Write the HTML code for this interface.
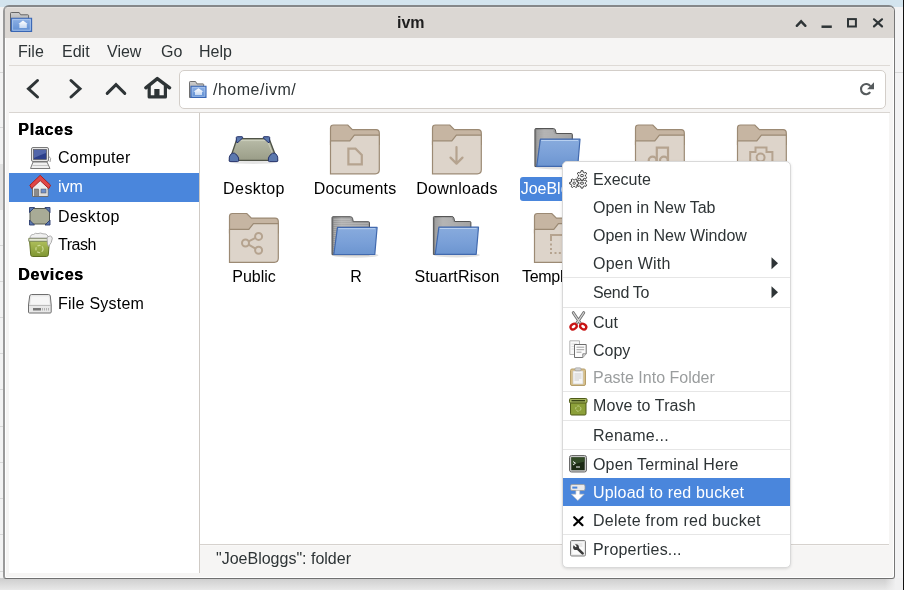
<!DOCTYPE html>
<html><head><meta charset="utf-8">
<style>
*{margin:0;padding:0;box-sizing:border-box}
html,body{width:904px;height:590px;overflow:hidden;background:#f2f2f2;font-family:"Liberation Sans",sans-serif;font-size:16px;color:#2e3436}
.a{position:absolute}
.t{position:absolute;white-space:nowrap;line-height:20px;height:20px;will-change:transform}
svg{position:absolute;overflow:visible}
.k{color:#000}
</style></head><body>
<!-- background -->
<div class="a" style="left:0;top:0;width:904px;height:7px;background:#d3e4ee"></div>
<div class="a" style="left:0;top:7px;width:4px;height:583px;background:#f3f3f3"></div>
<div class="a" style="left:0;top:72px;width:4px;height:1px;background:#d8d8d8"></div>
<div class="a" style="left:0;top:127px;width:4px;height:1px;background:#d8d8d8"></div>
<div class="a" style="left:0;top:245px;width:3px;height:1px;background:#d9d9d9"></div><div class="a" style="left:0;top:281px;width:3px;height:1px;background:#d9d9d9"></div><div class="a" style="left:0;top:317px;width:3px;height:1px;background:#d9d9d9"></div><div class="a" style="left:0;top:353px;width:3px;height:1px;background:#d9d9d9"></div><div class="a" style="left:0;top:389px;width:3px;height:1px;background:#d9d9d9"></div><div class="a" style="left:0;top:426px;width:3px;height:1px;background:#d9d9d9"></div><div class="a" style="left:0;top:462px;width:3px;height:1px;background:#d9d9d9"></div><div class="a" style="left:0;top:498px;width:3px;height:1px;background:#d9d9d9"></div><div class="a" style="left:0;top:534px;width:3px;height:1px;background:#d9d9d9"></div><div class="a" style="left:0;top:571px;width:3px;height:1px;background:#d9d9d9"></div><div class="a" style="left:0;top:164px;width:3px;height:46px;background:#e2e2e2"></div>
<div class="a" style="left:895px;top:7px;width:8px;height:583px;background:#f3f3f4"></div>
<div class="a" style="left:895px;top:72px;width:8px;height:1px;background:#d8d8d8"></div>
<div class="a" style="left:903px;top:0;width:1px;height:590px;background:#111"></div>
<div class="a" style="left:0;top:578px;width:895px;height:12px;background:linear-gradient(#cdcdcd,#e8e8e8)"></div><div class="a" style="left:885px;top:578px;width:18px;height:12px;background:linear-gradient(90deg,rgba(240,240,241,0),#f0f0f1 60%)"></div>

<!-- window -->
<div class="a" style="left:3px;top:5px;width:892px;height:574px;border-style:solid;border-color:#858789 #777 #707070 #9a9a9a;border-width:2px 1px 1px 2px;border-radius:6px 6px 3px 3px;background:#f6f5f4;overflow:hidden;box-shadow:inset 1px 0 0 #fff,inset -1px -1px 0 #fff">
  <div class="a" style="left:0;top:0;width:890px;height:31px;background:#dbd7d3;border-top:1px solid #e4e1de"></div>
</div>

<!-- title icon -->
<svg style="left:0;top:0" width="40" height="40">
 <defs>
  <linearGradient id="fg1" x1="0" y1="0" x2="0" y2="1"><stop offset="0" stop-color="#cfcfcf"/><stop offset="1" stop-color="#8d8d8d"/></linearGradient>
  <linearGradient id="fb1" x1="0" y1="0" x2="0" y2="1"><stop offset="0" stop-color="#8fb2e6"/><stop offset="1" stop-color="#5f8ed2"/></linearGradient>
  <linearGradient id="fh1" x1="0" y1="0" x2="0" y2="1"><stop offset="0" stop-color="#ffffff"/><stop offset="1" stop-color="#c6d8f2"/></linearGradient>
 </defs>
 <path d="M10.5,31 V13.3 Q10.5,12.5 11.3,12.5 H19.2 L20.6,14.8 H27.8 Q28.6,14.8 28.6,15.6 V31 Z" fill="url(#fg1)" stroke="#666" stroke-width="1"/>
 <path d="M11.3,18.2 H31.6 V31.5 H11.3 Z" fill="url(#fb1)" stroke="#3966b4" stroke-width="1.1"/>
 <path d="M12.6,19.6 H30.3 V30.2 H12.6 Z" fill="none" stroke="#b4cdf0" stroke-width=".9" opacity=".8"/>
 <path d="M23,20.6 L18.4,24 H19.4 V28 H26.8 V24 H27.7 Z" fill="url(#fh1)"/>
</svg>
<!-- title -->
<div class="t" style="left:397px;top:13px;font-weight:bold;color:#1e1e1e">ivm</div>
<!-- window controls -->
<svg style="left:0;top:0" width="904" height="40">
 <g fill="none" stroke="#2e3436" stroke-width="2.2">
  <path d="M796.8,25.8 L801.1,21.3 L805.4,25.8" stroke-width="2.4" stroke-linecap="round"/>
  <path d="M821.5,26.7 H831.8" stroke-width="2.5"/>
  <rect x="848" y="19.1" width="7.9" height="7.4" stroke-width="2"/>
  <path d="M874,19.3 L882,26.4 M882,19.3 L874,26.4" stroke-linecap="round"/>
 </g>
</svg>

<!-- menu bar -->
<div class="t" style="left:18px;top:42px">File</div>
<div class="t" style="left:62px;top:42px">Edit</div>
<div class="t" style="left:107px;top:42px">View</div>
<div class="t" style="left:161px;top:42px">Go</div>
<div class="t" style="left:199px;top:42px">Help</div>
<div class="a" style="left:9px;top:65px;width:881px;height:1px;background:#dedad6"></div>

<!-- toolbar -->
<svg style="left:0;top:60px" width="180" height="50">
 <g fill="none" stroke="#2e3436" stroke-width="3" stroke-linecap="round" stroke-linejoin="miter">
  <path d="M37.5,20.5 L28.5,28.8 L37.5,37"/>
  <path d="M71,20.5 L80,28.8 L71,37"/>
  <path d="M107.2,33.4 L116,24.6 L124.8,33.4"/>
 </g>
 <g fill="none" stroke="#2e3436" stroke-linecap="round" stroke-linejoin="round">
  <path d="M145.8,27.8 L157.3,18.6 L169.6,27.8" stroke-width="3.4"/>
  <path d="M149.2,26 V36.9 H165.4 V26" stroke-width="3.2"/>
 </g>
 <rect x="154.3" y="29" width="5.2" height="9" fill="#2e3436"/>
</svg>
<div class="a" style="left:179px;top:70px;width:707px;height:39px;border:1px solid #d3cec9;border-radius:5px;background:#fff"></div>
<svg style="left:0;top:0" width="904" height="110">
 <path d="M189.5,97.5 V82.2 Q189.5,81.5 190.2,81.5 H195.6 L196.9,83.9 H203 Q203.7,83.9 203.7,84.6 V97.5 Z" fill="url(#fg1)" stroke="#707070" stroke-width="1"/>
 <path d="M191,86.3 H206 V97.5 H191 Z" fill="url(#fb1)" stroke="#3966b4" stroke-width="1.1"/>
 <path d="M192.2,87.5 H204.8 V96.3 H192.2 Z" fill="none" stroke="#b4cdf0" stroke-width=".8" opacity=".7"/>
 <path d="M198.5,88.2 L193.4,91.8 H195 V95 H202 V91.8 H203.6 Z" fill="url(#fh1)"/>
 <g fill="none" stroke="#555a5c" stroke-width="2.1">
  <path d="M870.2,92.2 A5.1,5.1 0 1 1 870.3,86.2"/>
 </g>
 <path d="M874,82.3 V89.2 H867.1 Z" fill="#555a5c"/>
</svg>
<div class="t" style="left:213px;top:80px;letter-spacing:.5px">/home/ivm/</div>
<div class="a" style="left:9px;top:112px;width:881px;height:1px;background:#d9d5d1"></div>

<!-- sidebar -->
<div class="a" style="left:9px;top:113px;width:190px;height:460px;background:#fff"></div>
<div class="a" style="left:199px;top:113px;width:1px;height:460px;background:#cfcac5"></div>
<div class="a" style="left:9px;top:173px;width:190px;height:29px;background:#4a86dc"></div>
<div class="t k" style="left:18px;top:120px;font-weight:bold;letter-spacing:.8px;text-shadow:.45px 0 0 #000">Places</div>
<div class="t k" style="left:58px;top:148px;letter-spacing:.3px">Computer</div>
<div class="t" style="left:58px;top:177px;color:#fff">ivm</div>
<div class="t k" style="left:58px;top:207px;letter-spacing:.45px">Desktop</div>
<div class="t k" style="left:58px;top:235px;letter-spacing:-.45px">Trash</div>
<div class="t k" style="left:18px;top:265px;font-weight:bold;letter-spacing:.75px;text-shadow:.45px 0 0 #000">Devices</div>
<div class="t k" style="left:58px;top:294px;letter-spacing:.23px">File System</div>

<!-- main view -->
<div class="a" style="left:200px;top:113px;width:689px;height:431px;background:#fff"></div>
<div class="a" style="left:200px;top:544px;width:689px;height:1px;background:#d6d2ce"></div><div class="a" style="left:200px;top:545px;width:689px;height:1px;background:#f9f8f7"></div>
<div class="t" style="left:216px;top:549px">"JoeBloggs": folder</div>


<!-- icon defs -->
<svg width="0" height="0" style="position:absolute">
 <defs>
  <symbol id="bf" viewBox="0 0 50 50" overflow="visible">
   <path d="M0.5,3.5 Q0.5,0.5 3.5,0.5 H17.8 L22.4,5.1 H46 Q49.3,5.1 49.3,8.4 V20 H0.5 Z" fill="#c6b5a2" stroke="#9c8a74" stroke-width="1.2"/>
   <path d="M0.5,16.3 H19.8 L24.4,10.7 H49.3 V45.3 Q49.3,49.3 45.3,49.3 H0.5 Z" fill="#ddd4ca" stroke="#9c8a74" stroke-width="1.2"/>
  </symbol>
  <linearGradient id="gb" x1="0" y1="0" x2="0" y2="1"><stop offset="0" stop-color="#88abdd"/><stop offset=".55" stop-color="#7aa0d8"/><stop offset="1" stop-color="#6c95d0"/></linearGradient>
  <linearGradient id="gg" x1="0" y1="0" x2="1" y2="0"><stop offset="0" stop-color="#7c7c7c"/><stop offset=".25" stop-color="#a5a5a5"/><stop offset="1" stop-color="#8a8a8a"/></linearGradient>
  <symbol id="blf" viewBox="0 0 50 44" overflow="visible">
   <ellipse cx="24" cy="39" rx="23" ry="2.5" fill="#000" opacity=".12"/>
   <path d="M0.5,1.5 Q0.5,0.5 1.5,0.5 H19 Q20.5,0.5 21,2 L21.8,5.5 H37 Q38,5.5 38,6.5 V38.5 H0.5 Z" fill="url(#gg)" stroke="#555" stroke-width="1"/>
   <path d="M2,3 H19 M2,5 H20 M2,7 H37 M2,9 H37 M2,11 H37 M2,13 H5 M2,15 H5 M2,17 H5 M2,19 H5 M2,21 H4 M2,23 H4 M2,25 H4 M2,27 H4 M2,29 H4 M2,31 H3.5 M2,33 H3.5 M2,35 H3.5" stroke="#d2d2d2" stroke-width=".7"/>
   <path d="M6,11.2 H45.6 L43.3,38.3 H2.3 Z" fill="url(#gb)" stroke="#4169ae" stroke-width="1.2" stroke-linejoin="round"/>
   <path d="M6.8,12.5 H43.6" stroke="#b8d0f0" stroke-width="1"/>
  </symbol>
 </defs>
</svg>

<!-- row 1 -->
<svg style="left:0;top:0" width="904" height="590">
 <!-- desktop trapezoid -->
 <g>
  <defs><linearGradient id="dg" x1="0" y1="0" x2="0" y2="1"><stop offset="0" stop-color="#b9bca8"/><stop offset="1" stop-color="#9a9d88"/></linearGradient></defs>
  <ellipse cx="253.5" cy="162.3" rx="23" ry="1.6" fill="#000" opacity=".1"/>
  <path d="M237,138.6 H269 L277.4,160.4 H229.6 Z" fill="url(#dg)" stroke="#505448" stroke-width="1.4" stroke-linejoin="round"/>
  <path d="M238.6,140.6 H267.4 L274.5,158.5" fill="none" stroke="#d2d5c4" stroke-width="1" opacity=".8"/>
  <path d="M236.3,137.4 Q236.3,136.7 237.3,136.7 H242 Q243.4,136.9 242.4,138.2 L238,142.3 Q236.7,143.3 236.4,142 Z" fill="#5b78ae" stroke="#26336a" stroke-width="1"/>
  <path d="M269.7,137.4 Q269.7,136.7 268.7,136.7 H264 Q262.6,136.9 263.6,138.2 L268,142.3 Q269.3,143.3 269.6,142 Z" fill="#5b78ae" stroke="#26336a" stroke-width="1"/>
  <path d="M229.2,160.8 Q228.8,156.5 230.5,154.5 Q232.5,152.5 234.5,153.2 Q237.5,154.8 238.6,158 L238.6,160.8 Q238.6,161.6 237.6,161.6 H230 Q229.2,161.6 229.2,160.8 Z" fill="#5b78ae" stroke="#26336a" stroke-width="1"/>
  <path d="M277.8,160.8 Q278.2,156.5 276.5,154.5 Q274.5,152.5 272.5,153.2 Q269.5,154.8 268.4,158 L268.4,160.8 Q268.4,161.6 269.4,161.6 H277 Q277.8,161.6 277.8,160.8 Z" fill="#5b78ae" stroke="#26336a" stroke-width="1"/>
 </g>
 <!-- documents -->
 <use href="#bf" x="330" y="124.5" width="50" height="50"/>
 <path d="M348.4,148.6 H355.5 L361.8,154.9 V164.4 H348.4 Z" fill="none" stroke="#b5a38f" stroke-width="2.2" stroke-linejoin="miter"/>
 <!-- downloads -->
 <use href="#bf" x="432" y="124.5" width="50" height="50"/>
 <path d="M456.5,147 V163.5 M450.5,157.6 L456.5,163.6 L462.5,157.6" fill="none" stroke="#b5a38f" stroke-width="2.2" stroke-linecap="round" stroke-linejoin="round"/>
 <!-- JoeBloggs -->
 <use href="#blf" x="534.4" y="128" width="50" height="44"/>
 <!-- music -->
 <use href="#bf" x="635" y="124.5" width="50" height="50"/>
 <path d="M656.8,165 V147.6 H668 V165" fill="none" stroke="#b5a38f" stroke-width="2.2"/>
 <circle cx="652.6" cy="160.6" r="3.9" fill="none" stroke="#b5a38f" stroke-width="2.2"/><circle cx="663.9" cy="160.6" r="3.9" fill="none" stroke="#b5a38f" stroke-width="2.2"/>
 <!-- pictures -->
 <use href="#bf" x="737" y="124.5" width="50" height="50"/>
 <path d="M750.2,170 V152 H755.5 V147.5 H766.5 V152 H772.4 V170" fill="none" stroke="#b5a38f" stroke-width="2"/>
 <circle cx="760.6" cy="157.6" r="4" fill="none" stroke="#b5a38f" stroke-width="2"/>
 <!-- row 2 -->
 <use href="#bf" x="229" y="213" width="50" height="50"/>
 <g fill="none" stroke="#b5a38f" stroke-width="2">
  <circle cx="245.5" cy="243" r="3.5"/><circle cx="258.6" cy="236.4" r="3.5"/><circle cx="258.6" cy="250.2" r="3.5"/>
  <path d="M248.6,241.4 L255.5,237.9 M248.6,244.6 L255.5,248.7"/>
 </g>
 <use href="#blf" x="331.5" y="216.2" width="50" height="44"/>
 <use href="#blf" x="432.9" y="216" width="50" height="44"/>
 <use href="#bf" x="534" y="213" width="50" height="50"/>
 <path d="M551,241 V235 H562" fill="none" stroke="#b5a38f" stroke-width="2"/>
 <g fill="#b5a38f"><rect x="550" y="243.5" width="2" height="2"/><rect x="550" y="248" width="2" height="2"/><rect x="550" y="252" width="2" height="2"/><rect x="554.5" y="252" width="2" height="2"/><rect x="558.8" y="252" width="2" height="2"/></g>
</svg>
<div class="t k" style="left:203.6px;top:179px;width:100px;text-align:center;letter-spacing:.45px">Desktop</div>
<div class="t k" style="left:305px;top:179px;width:100px;text-align:center;letter-spacing:.2px">Documents</div>
<div class="t k" style="left:406.6px;top:179px;width:100px;text-align:center;letter-spacing:.25px">Downloads</div>
<div class="a" style="left:520px;top:177px;width:76px;height:24px;border-radius:3px;background:#4a86dc"></div>
<div class="t" style="left:508.2px;top:179px;width:100px;text-align:center;color:#fff">JoeBloggs</div>
<div class="t k" style="left:203.6px;top:267px;width:100px;text-align:center">Public</div>
<div class="t k" style="left:306px;top:267px;width:100px;text-align:center">R</div>
<div class="t k" style="left:407.3px;top:267px;width:100px;text-align:center;letter-spacing:.15px">StuartRison</div>
<div class="t k" style="left:522px;top:267px;letter-spacing:-.3px">Templates</div>

<!-- context menu -->
<div class="a" style="left:562px;top:161px;width:229px;height:407px;background:#fff;border:1px solid #d9d9d9;border-radius:5px;box-shadow:0 1px 3px rgba(0,0,0,.12)"></div>
<div class="a" style="left:563px;top:277px;width:227px;height:1px;background:#e6e6e6"></div>
<div class="a" style="left:563px;top:307px;width:227px;height:1px;background:#e6e6e6"></div>
<div class="a" style="left:563px;top:391px;width:227px;height:1px;background:#e6e6e6"></div>
<div class="a" style="left:563px;top:420px;width:227px;height:1px;background:#e6e6e6"></div>
<div class="a" style="left:563px;top:449px;width:227px;height:1px;background:#e6e6e6"></div>
<div class="a" style="left:563px;top:534px;width:227px;height:1px;background:#e6e6e6"></div>
<div class="a" style="left:563px;top:478px;width:227px;height:28px;background:#4a86dc"></div>
<div class="t" style="left:593px;top:170px">Execute</div>
<div class="t" style="left:593px;top:198px">Open in New Tab</div>
<div class="t" style="left:593px;top:226px">Open in New Window</div>
<div class="t" style="left:593px;top:254px;letter-spacing:.22px">Open With</div>
<div class="t" style="left:593px;top:283px;letter-spacing:-.35px">Send To</div>
<div class="t" style="left:593px;top:313px">Cut</div>
<div class="t" style="left:593px;top:341px">Copy</div>
<div class="t" style="left:593px;top:368px;color:#9a9d9e">Paste Into Folder</div>
<div class="t" style="left:593px;top:396px;letter-spacing:.1px">Move to Trash</div>
<div class="t" style="left:593px;top:426px;letter-spacing:.22px">Rename...</div>
<div class="t" style="left:593px;top:455px;letter-spacing:.15px">Open Terminal Here</div>
<div class="t" style="left:593px;top:483px;color:#fff;letter-spacing:.18px">Upload to red bucket</div>
<div class="t" style="left:593px;top:511px;letter-spacing:.27px">Delete from red bucket</div>
<div class="t" style="left:593px;top:540px;letter-spacing:.19px">Properties...</div>
<svg style="left:0;top:0" width="904" height="590">
 <path d="M771.5,257.2 L778,263.2 L771.5,269.2 Z" fill="#2e3436"/>
 <path d="M771.5,286.2 L778,292.2 L771.5,298.2 Z" fill="#2e3436"/>
</svg>


<!-- sidebar icons -->
<svg style="left:0;top:0" width="210" height="330">
 <!-- computer -->
 <g>
  <rect x="31.5" y="147.5" width="17" height="14" rx="1.5" fill="#e6e6e6" stroke="#7a7a7a" stroke-width="1"/>
  <rect x="33.5" y="149.5" width="13" height="10" fill="#2c3f8a" stroke="#555" stroke-width=".6"/>
  <path d="M34,150 L46,150 L46,153 Q40,155 34,158 Z" fill="#6d80c0" opacity=".6"/>
  <path d="M33,162 H47 L50,168.5 H30.5 Z" fill="#f0f0f0" stroke="#7a7a7a" stroke-width="1" stroke-linejoin="round"/>
  <path d="M32.5,165.5 H48" stroke="#bbb" stroke-width=".8"/>
  <path d="M48.5,156 Q52,158 50,162" fill="none" stroke="#888" stroke-width=".8"/>
 </g>
 <!-- home -->
 <g>
  <path d="M40.2,179 L32.5,186 V196.5 H48 V186 Z" fill="#ededed" stroke="#6e6e6e" stroke-width="1"/>
  <path d="M33,190 H47.5 V196 H33 Z" fill="#dcdcdc"/>
  <rect x="34.5" y="189" width="4.2" height="7.5" fill="#8a8a8a" stroke="#5e5e5e" stroke-width=".5"/>
  <rect x="41" y="189" width="5" height="4" fill="#6f8fc8" stroke="#555" stroke-width=".5"/>
  <path d="M40.2,175.3 L29.8,185.2 L31.6,188.6 L40.2,180.6 L48.8,188.6 L50.6,185.2 Z" fill="#e04646" stroke="#a82222" stroke-width="1" stroke-linejoin="round"/>
 </g>
 <!-- desktop small -->
 <g>
  <path d="M32.5,208.5 H47 L49.5,211 V221.5 L47,224 H32.5 L30,221.5 V211 Z" fill="#a8ab96" stroke="#55594c" stroke-width="1"/>
  <path d="M29.5,207.5 H34.5 L29.5,212.5 Z M50,207.5 H45 L50,212.5 Z M29.5,225 H34.5 L29.5,220 Z M50,225 H45 L50,220 Z" fill="#5a77ad" stroke="#2d3d6e" stroke-width=".9" stroke-linejoin="round"/>
 </g>
 <!-- trash -->
 <g>
  <defs><linearGradient id="tg" x1="0" y1="0" x2="0" y2="1"><stop offset="0" stop-color="#b2c25e"/><stop offset="1" stop-color="#7f9632"/></linearGradient></defs>
  <path d="M29.5,240 H49.5 L48.3,254.8 Q48.1,256.5 46.5,256.5 H32.5 Q30.9,256.5 30.7,254.8 Z" fill="url(#tg)" stroke="#5f6f22" stroke-width="1"/>
  <circle cx="39.5" cy="249" r="3.6" fill="none" stroke="#d5e0a0" stroke-width="1.2" stroke-dasharray="3.2 1.6" opacity=".85"/>
  <path d="M28.8,238.3 H50.2 V241.3 H28.8 Z" fill="#e3e7d2" stroke="#7a8656" stroke-width="1"/>
  <path d="M30,238 Q30.5,234 33.5,234.5 Q35,232.6 38,233.6 Q40.5,232.4 43,233.8 Q46.5,233.2 48,236 L48.5,238 Z" fill="#f0f0f0" stroke="#a0a0a0" stroke-width=".8"/>
  <path d="M47,237.5 Q51.5,234 52.3,238.5 Q52,242.5 48.5,246.5 L47.5,244 Z" fill="#ececec" stroke="#9a9a9a" stroke-width=".8"/>
 </g>
 <!-- file system -->
 <g>
  <path d="M31.5,294.5 H48.5 Q50,294.5 50.3,296 L51.2,305 V312 Q51.2,313 50.2,313 H29.5 Q28.5,313 28.5,312 V305 L29.7,296 Q30,294.5 31.5,294.5 Z" fill="#e8e8e8" stroke="#6e6e6e" stroke-width="1"/>
  <path d="M29,305.5 H51" stroke="#b0b0b0" stroke-width=".8"/>
  <path d="M31.5,296.5 H48.5 L49.5,304.5 H30.5 Z" fill="#f6f6f6"/>
  <rect x="33" y="308" width="8" height="2.5" fill="#777"/>
  <path d="M42.5,308 V310.5 M44.5,308 V310.5 M46.5,308 V310.5 M48.5,308 V310.5" stroke="#999" stroke-width=".7"/>
 </g>
</svg>

<!-- menu icons -->
<svg style="left:0;top:0" width="904" height="590">
 <!-- gears -->
 <g fill="#f6f6f6" stroke="#3c3c3c" stroke-width="1">
  <path d="M585.54,183.84 L586.70,184.92 L585.84,186.41 L584.32,185.95 L583.22,186.59 L582.86,188.13 L581.14,188.13 L580.78,186.59 L579.68,185.95 L578.16,186.41 L577.30,184.92 L578.46,183.84 L578.46,182.56 L577.30,181.48 L578.16,179.99 L579.68,180.45 L580.78,179.81 L581.14,178.27 L582.86,178.27 L583.22,179.81 L584.32,180.45 L585.84,179.99 L586.70,181.48 L585.54,182.56 Z"/>
  <path d="M585.54,176.24 L586.70,177.32 L585.84,178.81 L584.32,178.35 L583.22,178.99 L582.86,180.53 L581.14,180.53 L580.78,178.99 L579.68,178.35 L578.16,178.81 L577.30,177.32 L578.46,176.24 L578.46,174.96 L577.30,173.88 L578.16,172.39 L579.68,172.85 L580.78,172.21 L581.14,170.67 L582.86,170.67 L583.22,172.21 L584.32,172.85 L585.84,172.39 L586.70,173.88 L585.54,174.96 Z"/>
  <path d="M577.30,182.08 L578.73,182.41 L578.73,183.99 L577.30,184.32 L576.72,185.33 L577.15,186.73 L575.78,187.52 L574.78,186.45 L573.62,186.45 L572.62,187.52 L571.25,186.73 L571.68,185.33 L571.10,184.32 L569.67,183.99 L569.67,182.41 L571.10,182.08 L571.68,181.07 L571.25,179.67 L572.62,178.88 L573.62,179.95 L574.78,179.95 L575.78,178.88 L577.15,179.67 L576.72,181.07 Z"/>
 </g>
 <g fill="none" stroke="#3c3c3c" stroke-width=".9">
  <ellipse cx="582" cy="175.6" rx="1.7" ry="1.1"/><ellipse cx="582" cy="183.2" rx="1.7" ry="1.1"/><circle cx="574.2" cy="183.2" r="1.2"/>
 </g>
 <!-- scissors -->
 <g>
  <path d="M573.2,312.6 L580.6,323.6 M583.8,312.6 L576.4,323.6" stroke="#6e6e6e" stroke-width="2.8" stroke-linecap="round"/>
  <path d="M573.2,312.6 L580.6,323.6 M583.8,312.6 L576.4,323.6" stroke="#d4d4d4" stroke-width="1.1" stroke-linecap="round"/>
  <ellipse cx="573.6" cy="326.6" rx="3.3" ry="2.5" transform="rotate(-35 573.6 326.6)" fill="none" stroke="#c81414" stroke-width="2.3"/>
  <ellipse cx="583.2" cy="326.6" rx="3.3" ry="2.5" transform="rotate(35 583.2 326.6)" fill="none" stroke="#c81414" stroke-width="2.3"/>
 </g>
 <!-- copy -->
 <g>
  <path d="M569.8,340.8 H579.5 V354.5 H569.8 Z" fill="#f8f8f8" stroke="#b4b4b4" stroke-width="1"/>
  <path d="M571.5,344 H577 M571.5,346.5 H577 M571.5,349 H577" stroke="#d0d0d0" stroke-width=".7"/>
  <path d="M574.5,344.5 H586.2 V353.8 L582.8,357.5 H574.5 Z" fill="#fcfcfc" stroke="#6e6e6e" stroke-width="1"/>
  <path d="M576.5,347.2 H584.2 M576.5,349.7 H584.2 M576.5,352.2 H581.5" stroke="#8c8c8c" stroke-width=".8"/>
  <path d="M582.8,357.5 V353.8 H586.2" fill="#e4e4e4" stroke="#6e6e6e" stroke-width=".8"/>
 </g>
 <!-- paste -->
 <g>
  <rect x="570.5" y="369" width="15" height="16.5" rx="1.5" fill="#d8c08a" stroke="#b59e6a" stroke-width="1"/>
  <rect x="573" y="371" width="10" height="13" fill="#f6f6f6" stroke="#c8c8c8" stroke-width=".6"/>
  <rect x="575" y="367.8" width="6" height="3" rx="1" fill="#cfcfcf" stroke="#9a9a9a" stroke-width=".6"/>
  <path d="M574.5,374 H581.5 M574.5,376 H581.5 M574.5,378 H581.5 M574.5,380 H579" stroke="#bdbdbd" stroke-width=".7"/>
 </g>
 <!-- move to trash -->
 <g>
  <rect x="570.5" y="402" width="15.5" height="13" rx="1.2" fill="#8ca03a" stroke="#4e5a18" stroke-width="1"/>
  <rect x="569.5" y="398.5" width="17.5" height="4.5" rx="1.2" fill="#a6b65e" stroke="#4e5a18" stroke-width="1"/>
  <path d="M571.5,400.7 H585" stroke="#2e3a10" stroke-width="1.2"/>
  <circle cx="578.3" cy="408.6" r="2.6" fill="none" stroke="#c8d68e" stroke-width="1" stroke-dasharray="2.4 1.2"/>
 </g>
 <!-- terminal -->
 <g>
  <rect x="569.5" y="455.5" width="17" height="16.5" rx="2" fill="#c8c8c8" stroke="#6a6a6a" stroke-width="1"/>
  <rect x="571.3" y="457.3" width="13.4" height="12.9" fill="#1c2a14"/>
  <path d="M571.3,457.3 H584.7 V461.5 Q578,463 571.3,465 Z" fill="#3d5a30" opacity=".7"/>
  <path d="M573,461.5 L575.5,463.2 L573,465" fill="none" stroke="#e8e8e8" stroke-width="1"/>
  <path d="M576,467 H580" stroke="#e8e8e8" stroke-width="1.1"/>
 </g>
 <!-- upload -->
 <g>
  <rect x="570.5" y="484.5" width="14.5" height="6" rx="1.5" fill="#eaeaea" stroke="#9a9a9a" stroke-width=".8"/>
  <rect x="572.3" y="486.6" width="5" height="2" fill="#4a86dc"/>
  <path d="M575.9,490.6 H579.7 V494.2 H584.2 L577.8,500.6 L571.4,494.2 H575.9 Z" fill="#fff" stroke="#bcbcbc" stroke-width=".6"/>
 </g>
 <!-- delete X -->
 <path d="M574.2,517.2 L582.5,525.2 M582.5,517.2 L574.2,525.2" stroke="#000" stroke-width="2.2" stroke-linecap="round"/>
 <!-- properties -->
 <g>
  <rect x="570.5" y="540.5" width="15" height="15.5" rx="1.2" fill="#e6e6e6" stroke="#808080" stroke-width="1"/>
  <rect x="572.2" y="542.2" width="11.6" height="12.1" fill="#fbfbfb"/>
  <path d="M573.5,544 H582.5 M578.5,546 H582.5" stroke="#c4c4c4" stroke-width=".7"/>
  <path d="M577.2,548.3 L582.6,553.4" stroke="#3a3a3a" stroke-width="2.6" stroke-linecap="round"/>
  <circle cx="576" cy="547.2" r="2.9" fill="#3a3a3a"/>
  <path d="M573.6,544 L576.2,546.8" stroke="#fbfbfb" stroke-width="1.6"/>
 </g>
</svg>

</body></html>
